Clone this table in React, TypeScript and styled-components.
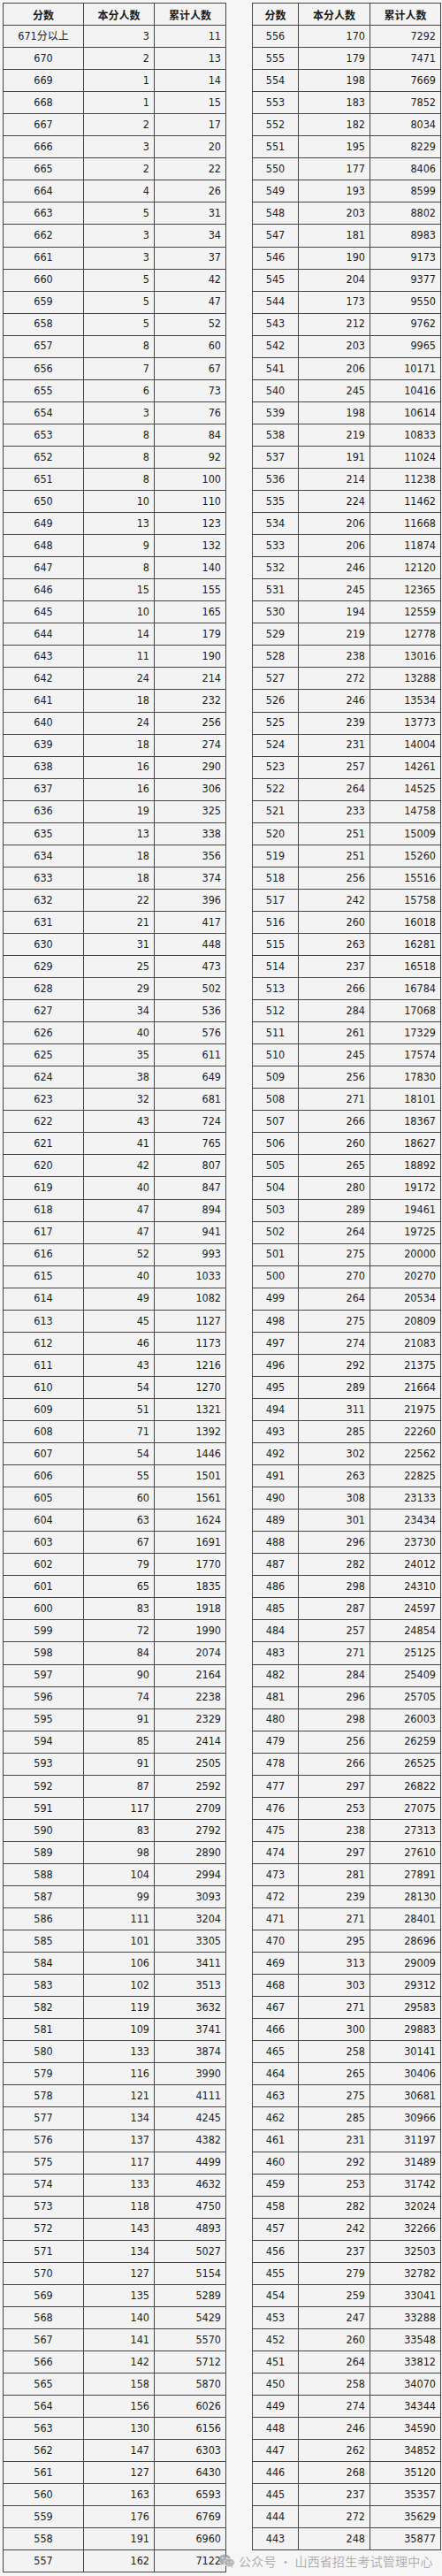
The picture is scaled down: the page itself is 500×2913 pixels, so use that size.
import React from 'react';
import styled, { createGlobalStyle } from 'styled-components';

const GlobalStyle = createGlobalStyle`
  html, body {
    margin: 0;
    padding: 0;
    background: #f6f6f6;
  }
  body {
    font-family: "DejaVu Sans Condensed", "DejaVu Sans", "Noto Sans CJK SC", sans-serif;
  }
`;

// counts per score, cumulative is derived (first row starts at 11)
const leftCounts = [
  3, 2, 1, 1, 2, 3, 2, 4, 5, 3, 3, 5, 5, 5, 8, 7, 6, 3, 8, 8, 8, 10, 13, 9, 8, 15, 10, 14,
  11, 24, 18, 24, 18, 16, 16, 19, 13, 18, 18, 22, 21, 31, 25, 29, 34, 40, 35, 38, 32, 43,
  41, 42, 40, 47, 47, 52, 40, 49, 45, 46, 43, 54, 51, 71, 54, 55, 60, 63, 67, 79, 65, 83,
  72, 84, 90, 74, 91, 85, 91, 87, 117, 83, 98, 104, 99, 111, 101, 106, 102, 119, 109, 133,
  116, 121, 134, 137, 117, 133, 118, 143, 134, 127, 135, 140, 141, 142, 158, 156, 130, 147,
  127, 163, 176, 191, 162,
];

const rightCounts = [
  170, 179, 198, 183, 182, 195, 177, 193, 203, 181, 190, 204, 173, 212, 203, 206, 245, 198,
  219, 191, 214, 224, 206, 206, 246, 245, 194, 219, 238, 272, 246, 239, 231, 257, 264, 233,
  251, 251, 256, 242, 260, 263, 237, 266, 284, 261, 245, 256, 271, 266, 260, 265, 280, 289,
  264, 275, 270, 264, 275, 274, 292, 289, 311, 285, 302, 263, 308, 301, 296, 282, 298, 287,
  257, 271, 284, 296, 298, 256, 266, 297, 253, 238, 297, 281, 239, 271, 295, 313, 303, 271,
  300, 258, 265, 275, 285, 231, 292, 253, 282, 242, 237, 279, 259, 247, 260, 264, 258, 274,
  246, 262, 268, 237, 272, 248,
];

type Row = { score: string; count: number; total: number };

const buildRows = () => {
  const left: Row[] = [];
  const right: Row[] = [];
  let total = 8;
  leftCounts.forEach((count, i) => {
    total += count;
    left.push({ score: i === 0 ? '671分以上' : String(671 - i), count, total });
  });
  rightCounts.forEach((count, i) => {
    total += count;
    right.push({ score: String(556 - i), count, total });
  });
  return { left, right };
};

const Page = styled.div`
  position: relative;
  display: flex;
  align-items: flex-start;
  gap: 29px;
  padding: 3px 3px 4px 3px;
  height: 2913px;
  box-sizing: border-box;
`;

const Table = styled.table<{ $cols: number[] }>`
  border-collapse: collapse;
  table-layout: fixed;
  width: ${p => p.$cols.reduce((a, b) => a + b, 0)}px;
  border: 1px solid #6a6a6a;
  background: #f3f3f3;
  font-size: 12.5px;
  color: #1c1c1c;
`;

const Tr = styled.tr`
  height: 25.05px;
`;

const Th = styled.th`
  border: 1px solid #454545;
  padding: 0 4px;
  font-weight: bold;
  text-align: center;
  font-family: "Noto Sans CJK SC", "DejaVu Sans Condensed", sans-serif;
  font-size: 12px;
  color: #1a1a1a;
`;

const Td = styled.td<{ $align: 'center' | 'right' }>`
  border: 1px solid #454545;
  padding: 0 ${p => (p.$align === 'right' ? '5px' : '2px')} 0 2px;
  text-align: ${p => p.$align};
  white-space: nowrap;
  line-height: 1;
`;

const Cjk = styled.span`
  font-family: "Noto Sans CJK SC", sans-serif;
  font-size: 12px;
`;

const Watermark = styled.div`
  position: absolute;
  left: 247px;
  bottom: 9px;
  display: flex;
  align-items: center;
  gap: 4px;
  font-family: "Noto Sans CJK SC", sans-serif;
  font-size: 14px;
  line-height: 1;
  color: rgba(150, 150, 150, 0.75);
  letter-spacing: 0.2px;
  white-space: nowrap;
`;

const WeChatIcon = () => (
  <svg width="19" height="16" viewBox="0 0 19 16">
    <ellipse cx="7.2" cy="6.2" rx="6.8" ry="5.6" fill="rgba(150,150,150,0.75)" />
    <path d="M3 10 L2.2 13 L5.6 11.2 Z" fill="rgba(150,150,150,0.75)" />
    <ellipse cx="12.6" cy="10" rx="5.8" ry="4.8" fill="rgba(175,175,175,0.85)" stroke="#f6f6f6" strokeWidth="0.8" />
    <path d="M15.6 13.6 L16.6 15.8 L13.8 14.4 Z" fill="rgba(175,175,175,0.85)" />
    <circle cx="4.9" cy="4.6" r="0.9" fill="#f6f6f6" />
    <circle cx="9.2" cy="4.6" r="0.9" fill="#f6f6f6" />
    <circle cx="10.7" cy="9.2" r="0.7" fill="#f6f6f6" />
    <circle cx="14.5" cy="9.2" r="0.7" fill="#f6f6f6" />
  </svg>
);

const ScoreTable = ({ rows, cols }: { rows: Row[]; cols: number[] }) => (
  <Table $cols={cols}>
    <colgroup>
      {cols.map((w, i) => (
        <col key={i} style={{ width: w }} />
      ))}
    </colgroup>
    <thead>
      <Tr>
        <Th>分数</Th>
        <Th>本分人数</Th>
        <Th>累计人数</Th>
      </Tr>
    </thead>
    <tbody>
      {rows.map(r => (
        <Tr key={r.score}>
          <Td $align="center">
            {r.score.endsWith('以上') ? (
              <>
                {r.score.slice(0, 3)}
                <Cjk>分以上</Cjk>
              </>
            ) : (
              r.score
            )}
          </Td>
          <Td $align="right">{r.count}</Td>
          <Td $align="right">{r.total}</Td>
        </Tr>
      ))}
    </tbody>
  </Table>
);

export default function App() {
  const { left, right } = buildRows();

  return (
    <>
      <GlobalStyle />
      <Page>
        <ScoreTable rows={left} cols={[91, 80, 81]} />
        <ScoreTable rows={right} cols={[52, 81, 80]} />
        <Watermark>
          <WeChatIcon />
          <span>公众号 · 山西省招生考试管理中心</span>
        </Watermark>
      </Page>
    </>
  );
}
